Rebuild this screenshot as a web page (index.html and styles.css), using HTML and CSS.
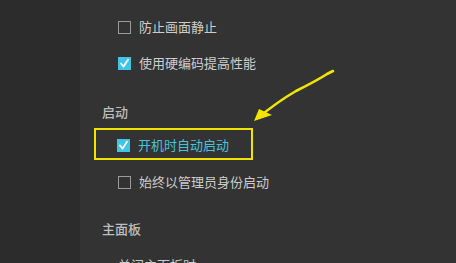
FILE: index.html
```html
<!DOCTYPE html>
<html lang="zh">
<head>
<meta charset="utf-8">
<link rel="stylesheet" href="styles.css">
</head>
<body>
<div class="app">
  <aside class="sidebar"></aside>
  <main class="main">
    <div class="row"><span class="cb"></span><span class="label">防止画面静止</span></div>
    <div class="row"><span class="cb checked"><svg viewBox="0 0 13 13"><path d="M3 6.5 L5.6 9.6 L10 2.8" /></svg></span><span class="label">使用硬编码提高性能</span></div>
    <div class="heading heading-first">启动</div>
    <div class="highlight">
      <div class="row row-in"><span class="cb checked"><svg viewBox="0 0 13 13"><path d="M3 6.5 L5.6 9.6 L10 2.8" /></svg></span><span class="label label-active">开机时自动启动</span></div>
    </div>
    <div class="row row-after"><span class="cb"></span><span class="label">始终以管理员身份启动</span></div>
    <div class="heading heading-second">主面板</div>
    <div class="row row-last"><span class="label">关闭主面板时</span></div>
  </main>
</div>
<svg class="arrow" width="456" height="263" viewBox="0 0 456 263">
  <path d="M333 71 L327 74 C 318 80, 306 86, 296 91 C 284 98, 270 108, 259 117" fill="none" stroke="#f2e600" stroke-width="2.6" stroke-linecap="round"/>
  <polygon points="254,121 259,109 272,115" fill="#f2e600"/>
</svg>
</body>
</html>
```
FILE: styles.css
```css
html, body {
  margin: 0;
  padding: 0;
  width: 456px;
  height: 263px;
  overflow: hidden;
  background: #2c2c2c;
  font-family: "Noto Sans CJK SC", "Noto Sans", sans-serif;
  font-size: 13px;
}
.app {
  display: flex;
  height: 263px;
  position: relative;
}
.sidebar {
  width: 80px;
  flex: none;
  background: #2c2c2c;
}
.main {
  flex: 1;
  background: #333333;
  padding-top: 9px;
  overflow: hidden;
}
.row {
  height: 36px;
  display: flex;
  align-items: center;
  padding-left: 38px;
  gap: 8px;
}
.cb {
  width: 13px;
  height: 13px;
  box-sizing: border-box;
  border: 1.5px solid #9a9a9a;
  flex: none;
  display: flex;
}
.cb.checked {
  border: none;
  background: #3fc5e6;
}
.cb svg {
  width: 13px;
  height: 13px;
}
.cb svg path {
  fill: none;
  stroke: #ffffff;
  stroke-width: 1.8;
  stroke-linecap: round;
  stroke-linejoin: round;
}
.label {
  color: #cdcdcd;
  line-height: 16px;
}
.label-active {
  color: #45c3dc;
}
.heading {
  padding-left: 22px;
  height: 18px;
  line-height: 18px;
  color: #bdbdbd;
  font-weight: 500;
}
.heading-first {
  margin-top: 22px;
  margin-bottom: 7px;
}
.highlight {
  margin-left: 14px;
  width: 159px;
  height: 32px;
  box-sizing: border-box;
  border: 2.6px solid #f0e400;
}
.row-in {
  height: 27px;
  padding-top: 3px;
  padding-left: 21px;
  box-sizing: border-box;
}
.row-after {
  margin-top: 4px;
}
.heading-second {
  margin-top: 20px;
}
.row-last {
  margin-top: 9px;
}
.arrow {
  position: absolute;
  left: 0;
  top: 0;
  pointer-events: none;
}
```
